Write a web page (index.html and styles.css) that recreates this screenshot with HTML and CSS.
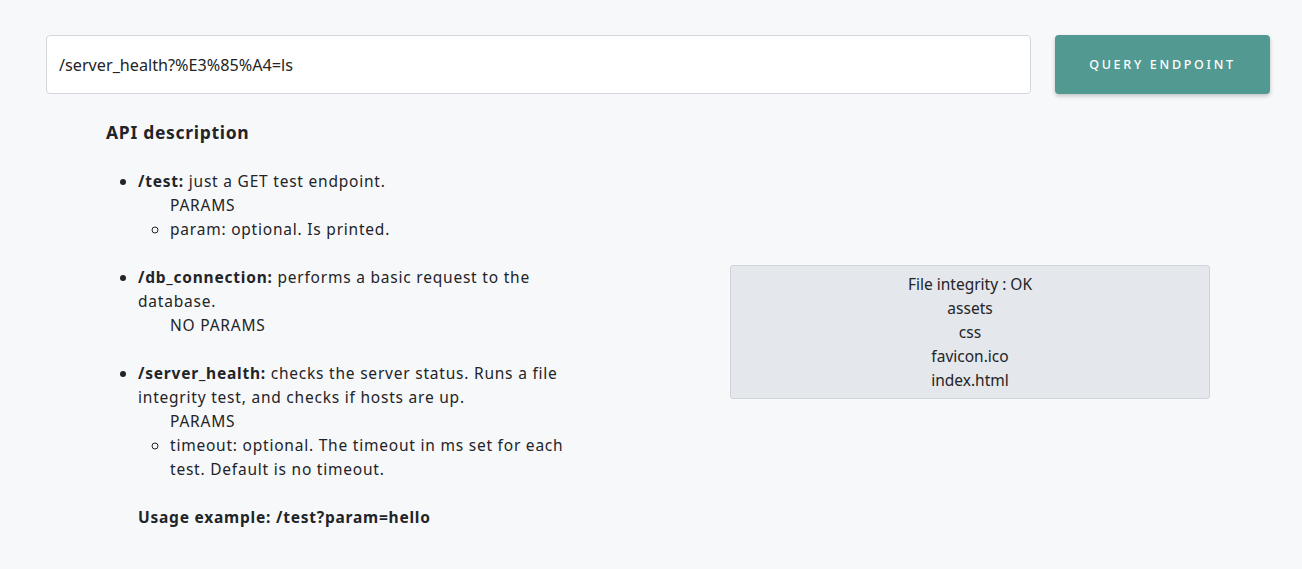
FILE: index.html
```html
<!DOCTYPE html>
<html>
<head>
<meta charset="utf-8">
<link rel="stylesheet" href="styles.css">
</head>
<body>
<div class="page">
  <div class="query-row">
    <input class="query-input" type="text" value="/server_health?%E3%85%A4=ls">
    <button class="query-btn">QUERY ENDPOINT</button>
  </div>
  <div class="content">
    <section class="docs">
      <h2 class="docs-title">API description</h2>
      <ul class="endpoints">
        <li>
          <b>/test:</b> just a GET test endpoint.
          <div class="params">PARAMS</div>
          <ul class="sub">
            <li>param: optional. Is printed.</li>
          </ul>
        </li>
        <li>
          <b>/db_connection:</b> performs a basic request to the database.
          <div class="params">NO PARAMS</div>
        </li>
        <li>
          <b>/server_health:</b> checks the server status. Runs a file integrity test, and checks if hosts are up.
          <div class="params">PARAMS</div>
          <ul class="sub">
            <li>timeout: optional. The timeout in ms set for each test. Default is no timeout.</li>
          </ul>
        </li>
      </ul>
      <p class="usage">Usage example: /test?param=hello</p>
    </section>
    <section class="result-wrap">
      <div class="result">
        <div>File integrity : OK</div>
        <div>assets</div>
        <div>css</div>
        <div>favicon.ico</div>
        <div>index.html</div>
        <div>js</div>
      </div>
    </section>
  </div>
</div>
</body>
</html>
```
FILE: styles.css
```css
* { box-sizing: border-box; }
html, body { margin: 0; padding: 0; }
body {
  background: #f7f8fa;
  font-family: "Noto Sans", "Open Sans", sans-serif;
  color: #222428;
}
.page {
  padding: 35px 32px 0 46px;
}
.query-row {
  display: flex;
  gap: 24px;
  align-items: stretch;
}
.query-input {
  flex: 1;
  height: 59px;
  border: 1px solid #d3d6db;
  border-radius: 4px;
  background: #ffffff;
  padding: 0 12px;
  font-family: "Noto Sans", sans-serif;
  font-size: 16.2px;
  color: #222428;
  outline: none;
}
.query-btn {
  width: 215px;
  height: 59px;
  border: none;
  border-radius: 4px;
  background: #529a91;
  color: #ffffff;
  font-family: "Noto Sans", sans-serif;
  font-size: 12.5px;
  font-weight: 500;
  letter-spacing: 2.7px;
  box-shadow: 0 2px 4px rgba(0, 0, 0, 0.22);
}
.content {
  display: flex;
}
.docs {
  width: 540px;
  padding-left: 60px;
  letter-spacing: 0.78px;
  font-size: 15.5px;
  line-height: 24px;
}
.docs-title {
  margin: 18px 0 17px;
  font-size: 17.5px;
  font-weight: 700;
  letter-spacing: 0.7px;
  line-height: 40px;
}
.endpoints {
  margin: 0;
  padding-left: 32px;
}
.endpoints > li {
  margin-bottom: 24px;
}
.endpoints b { font-weight: 700; }
.params {
  padding-left: 32px;
}
.sub {
  list-style: circle;
  margin: 0;
  padding-left: 32px;
}
.usage {
  margin: 0;
  padding-left: 32px;
  font-weight: 700;
}
.result-wrap {
  flex: 1;
  padding-left: 144px;
  padding-top: 171px;
}
.result {
  width: 480px;
  height: 134px;
  overflow: hidden;
  background: #e4e7eb;
  border: 1px solid #cfd3d8;
  border-radius: 3px;
  text-align: center;
  font-size: 15.5px;
  line-height: 24px;
  padding-top: 6px;
}
```
